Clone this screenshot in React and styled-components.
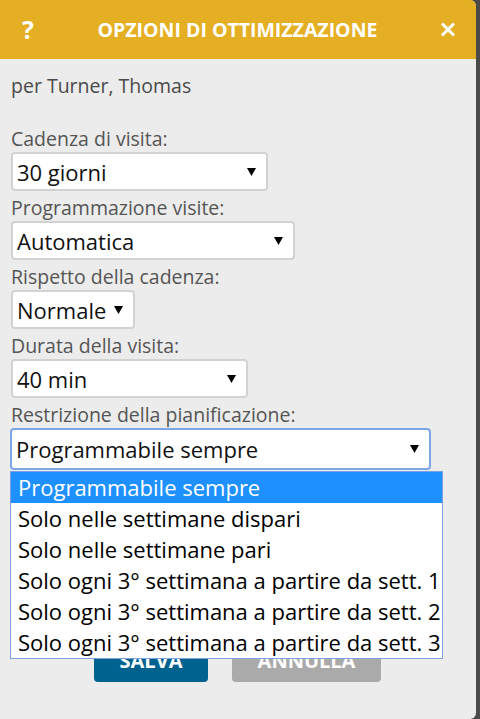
import styled, { createGlobalStyle } from "styled-components";

const GlobalStyle = createGlobalStyle`
  html, body {
    margin: 0;
    padding: 0;
    background: #4a4a4a;
    font-family: "Open Sans", "Liberation Sans", sans-serif;
  }
`;

const Dialog = styled.section`
  width: 476px;
  height: 719px;
  background: #ececec;
  border-radius: 0 6px 6px 0;
  overflow: hidden;
  display: flex;
  flex-direction: column;
`;

const Header = styled.header`
  height: 59px;
  background: #e5af23;
  color: #fff;
  display: flex;
  align-items: center;
  justify-content: space-between;
  padding: 0 20px 0 21px;
  font-weight: 700;
`;

const Help = styled.span`
  font-size: 25px;
  width: 14px;
  text-align: center;
  line-height: 1;
`;

const Title = styled.h1`
  margin: 0;
  font-size: 19.5px;
  font-weight: 700;
`;

const Body = styled.div`
  position: relative;
  padding: 13px 12px 0 11px;
  display: flex;
  flex-direction: column;
`;

const Owner = styled.p`
  margin: 0 0 26px;
  font-size: 19.5px;
  line-height: 28px;
  color: #4a4a4a;
`;

const Label = styled.label`
  display: block;
  font-size: 19.5px;
  color: #555;
  line-height: 26px;
`;

const Select = styled.div`
  box-sizing: border-box;
  width: ${(p) => p.$w}px;
  height: ${(p) => (p.$focus ? 42 : 39)}px;
  background: #fff;
  border: ${(p) => (p.$focus ? "2px solid #7ea6e6" : "2px solid #d2d2d2")};
  border-radius: 4px;
  display: flex;
  align-items: center;
  justify-content: space-between;
  padding: 0 10px 0 4px;
  font-size: 22px;
  color: #111;
  margin-bottom: 4px;
  margin-left: ${(p) => (p.$focus ? -1 : 0)}px;
`;

const DropList = styled.ul`
  position: absolute;
  left: 10px;
  top: 412px;
  width: 433px;
  box-sizing: border-box;
  margin: 0;
  padding: 0;
  list-style: none;
  background: #fff;
  border: 1px solid #7e9fe0;
  z-index: 2;
`;

const Option = styled.li`
  height: 31px;
  line-height: 31px;
  padding-left: 7px;
  font-size: 22px;
  white-space: nowrap;
  color: ${(p) => (p.$active ? "#fff" : "#000")};
  background: ${(p) => (p.$active ? "#1e90ff" : "#fff")};
`;

const Buttons = styled.div`
  display: flex;
  justify-content: center;
  gap: 24px;
  margin-top: 165px;
`;

const Button = styled.button`
  height: 43px;
  width: ${(p) => p.$w}px;
  border: none;
  border-radius: 4px;
  background: ${(p) => p.$bg};
  color: #fff;
  font-family: inherit;
  font-size: 20px;
  font-weight: 700;
`;

const Arrow = () => (
  <svg width="9" height="8" viewBox="0 0 9 8">
    <path d="M0 0 H9 L4.5 8 Z" fill="#000" />
  </svg>
);

const CloseIcon = () => (
  <svg width="16" height="15" viewBox="0 0 16 15">
    <path d="M2 1.5 L14 13.5 M14 1.5 L2 13.5" stroke="#fff" strokeWidth="3" />
  </svg>
);

const fields = [
  { label: "Cadenza di visita:", value: "30 giorni", w: 257 },
  { label: "Programmazione visite:", value: "Automatica", w: 284 },
  { label: "Rispetto della cadenza:", value: "Normale", w: 124 },
  { label: "Durata della visita:", value: "40 min", w: 237 },
  { label: "Restrizione della pianificazione:", value: "Programmabile sempre", w: 421, focus: true },
];

const options = [
  "Programmabile sempre",
  "Solo nelle settimane dispari",
  "Solo nelle settimane pari",
  "Solo ogni 3° settimana a partire da sett. 1",
  "Solo ogni 3° settimana a partire da sett. 2",
  "Solo ogni 3° settimana a partire da sett. 3",
];

export default function App() {
  return (
    <>
      <GlobalStyle />
      <Dialog>
        <Header>
          <Help>?</Help>
          <Title>OPZIONI DI OTTIMIZZAZIONE</Title>
          <CloseIcon />
        </Header>
        <Body>
          <Owner>per Turner, Thomas</Owner>
          {fields.map((f) => (
            <div key={f.label}>
              <Label>{f.label}</Label>
              <Select $w={f.w} $focus={f.focus}>
                <span>{f.value}</span>
                <Arrow />
              </Select>
            </div>
          ))}
          <DropList>
            {options.map((o, i) => (
              <Option key={o} $active={i === 0}>
                {o}
              </Option>
            ))}
          </DropList>
          <Buttons>
            <Button $w={114} $bg="#00628f">SALVA</Button>
            <Button $w={149} $bg="#aaaaaa">ANNULLA</Button>
          </Buttons>
        </Body>
      </Dialog>
    </>
  );
}
